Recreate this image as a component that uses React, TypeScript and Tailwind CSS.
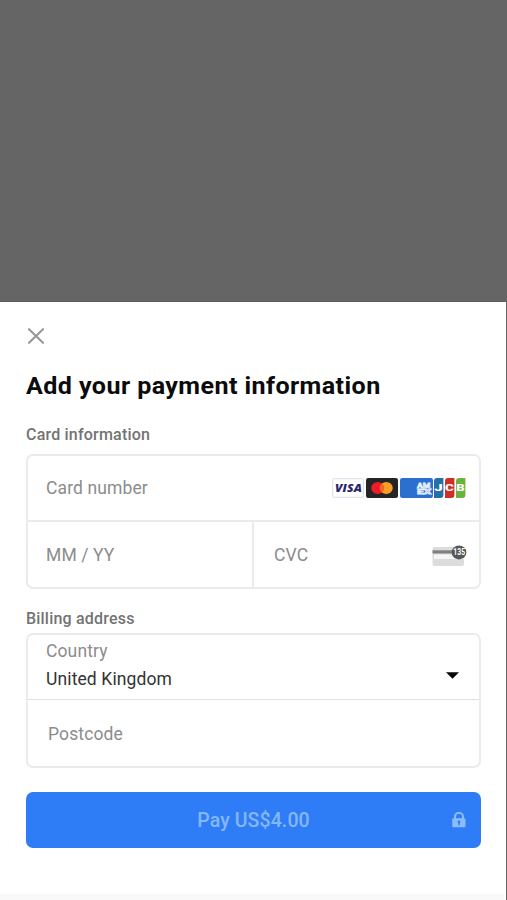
import React from "react";

const VisaLogo = () => (
  <svg width="32" height="20" viewBox="0 0 32 20">
    <rect x="0.6" y="0.6" width="30.8" height="18.8" rx="2" fill="#fff" stroke="#e4e4ee" strokeWidth="1.2" />
    <text
      x="3"
      y="13.8"
      textLength="27"
      lengthAdjust="spacingAndGlyphs"
      fontFamily="Open Sans, sans-serif"
      fontSize="10.8"
      fontWeight="800"
      fontStyle="italic"
      fill="#28256e"
    >
      VISA
    </text>
  </svg>
);

const MastercardLogo = () => (
  <svg width="32" height="20" viewBox="0 0 32 20">
    <rect width="32" height="20" rx="2.2" fill="#252525" />
    <ellipse cx="11.7" cy="10" rx="6.5" ry="6" fill="#eb1c26" />
    <ellipse cx="20.3" cy="10" rx="6.5" ry="6" fill="#f79e2b" />
    <path d="M16 5.5a6.4 6 0 0 1 0 9a6.4 6 0 0 1 0-9z" fill="#fb6020" />
  </svg>
);

const AmexLogo = () => (
  <svg width="33" height="20" viewBox="0 0 33 20">
    <rect width="33" height="20" rx="2.2" fill="#2c70cf" />
    <g
      fontFamily="Roboto, sans-serif"
      fontSize="7.6"
      fontWeight="700"
      fill="#2c70cf"
      stroke="#e6f1ff"
      strokeWidth="0.8"
    >
      <text x="17" y="9.6" textLength="13.5" lengthAdjust="spacingAndGlyphs">
        AM
      </text>
      <text x="17" y="16" textLength="14.5" lengthAdjust="spacingAndGlyphs">
        EX
      </text>
    </g>
  </svg>
);

const JcbLogo = () => (
  <svg width="32" height="20" viewBox="0 0 32 20">
    <path d="M3 0H9.4V17A3 3 0 0 1 6.4 20H0V3A3 3 0 0 1 3 0z" fill="#266fa8" />
    <path d="M14 0H20.4V17A3 3 0 0 1 17.4 20H11V3A3 3 0 0 1 14 0z" fill="#cf2f25" />
    <path d="M25 0H31.4V17A3 3 0 0 1 28.4 20H22V3A3 3 0 0 1 25 0z" fill="#6cb33e" />
    <g fontFamily="Roboto, sans-serif" fontSize="9.5" fontWeight="900" fill="#fff">
      <text x="0.2" y="13.4" textLength="8.6" lengthAdjust="spacingAndGlyphs">
        J
      </text>
      <text x="11" y="13.4" textLength="9" lengthAdjust="spacingAndGlyphs">
        C
      </text>
      <text x="22.3" y="13.4" textLength="8.6" lengthAdjust="spacingAndGlyphs">
        B
      </text>
    </g>
  </svg>
);

const CvcIcon = () => (
  <svg width="35" height="22" viewBox="0 0 35 22">
    <rect x="0.5" y="2" width="31.5" height="19" rx="2" fill="#dcdcdc" />
    <rect x="0.5" y="5.3" width="23" height="3.2" fill="#808080" />
    <rect x="2" y="9.5" width="30" height="4.5" fill="#f6f6f6" />
    <ellipse cx="27" cy="7.4" rx="7.4" ry="7" fill="#575757" />
    <text
      x="21.2"
      y="10.4"
      textLength="12"
      lengthAdjust="spacingAndGlyphs"
      fontFamily="Roboto, sans-serif"
      fontSize="8.6"
      fontWeight="700"
      fill="#fff"
    >
      135
    </text>
  </svg>
);

const LockIcon = () => (
  <svg width="14" height="16" viewBox="0 0 14 16" fill="none">
    <path d="M3 7V4.8a4 4 0 0 1 8 0V7" stroke="#8bbcfd" strokeWidth="2" />
    <rect x="0.3" y="6.3" width="13.2" height="9" rx="1.3" fill="#8bbcfd" />
    <circle cx="7" cy="10" r="1.4" fill="#2f7df6" />
    <rect x="6.3" y="10" width="1.4" height="3.2" fill="#2f7df6" />
  </svg>
);

export default function App() {
  return (
    <div className="flex h-[900px] w-[507px] flex-col overflow-hidden border-r border-[#656565] bg-[#656565] font-['Roboto',sans-serif]">
      <div className="h-[302px] shrink-0 border-b border-[#5d5d5d]" />

      <div className="flex flex-1 flex-col bg-white pl-[26px] pr-[25px]">
        <button className="mt-[26px] ml-[2px] h-4 w-4" aria-label="Close">
          <svg width="16" height="16" viewBox="0 0 16 16">
            <path d="M1 1.2L15 14.8M15 1.2L1 14.8" stroke="#999" strokeWidth="2.2" strokeLinecap="round" />
          </svg>
        </button>

        <h1 className="mt-[26px] h-8 origin-left scale-x-[1.045] whitespace-nowrap text-[24px] leading-8 font-bold tracking-[0.4px] text-[#0b0b0b]">
          Add your payment information
        </h1>

        <h2 className="mt-[21px] h-6 text-[16px] leading-6 font-medium tracking-[0.2px] text-[#737373]">
          Card information
        </h2>
        <div className="mt-[7px] h-[135px] rounded-[7px] border-2 border-[#ebebeb] text-[17.5px] tracking-[0.12px] text-[#8c8c8c]">
          <div className="flex h-[66px] items-center justify-between border-b-2 border-[#ebebeb] pr-[13px] pl-[18px]">
            <span>Card number</span>
            <div className="flex">
              <VisaLogo />
              <div className="mx-[2px]">
                <MastercardLogo />
              </div>
              <AmexLogo />
              <div className="ml-px">
                <JcbLogo />
              </div>
            </div>
          </div>
          <div className="flex h-[65px]">
            <div className="flex w-[226px] items-center border-r-2 border-[#ebebeb] pt-[2px] pl-[18px]">
              MM / YY
            </div>
            <div className="flex flex-1 items-center justify-between pt-[2px] pr-[12px] pl-[20px]">
              <span>CVC</span>
              <CvcIcon />
            </div>
          </div>
        </div>

        <h2 className="mt-[18px] h-6 text-[16px] leading-6 font-medium tracking-[0.2px] text-[#737373]">
          Billing address
        </h2>
        <div className="mt-[2px] h-[135px] rounded-[7px] border-2 border-[#ebebeb] text-[17.5px] tracking-[0.12px] text-[#8c8c8c]">
          <div className="flex h-[65px] items-center justify-between border-b border-[#dfdfdf] pr-[20px] pb-[5px] pl-[18px]">
            <div className="leading-7">
              <p>Country</p>
              <p className="text-[#333]">United Kingdom</p>
            </div>
            <svg className="mt-[22px]" width="13" height="7" viewBox="0 0 13 7">
              <path d="M0 0.3H13L6.5 6.7z" fill="#050505" />
            </svg>
          </div>
          <div className="flex h-[66px] items-center pt-[2px] pl-5">Postcode</div>
        </div>

        <button className="mt-6 flex h-14 items-center rounded-[7px] bg-[#2f7df6] pr-[15px] text-[#84b7fd]">
          <span className="flex-1 pt-px pl-[29px] text-center text-[19.5px] font-medium tracking-[0.1px]">
            Pay US$4.00
          </span>
          <LockIcon />
        </button>

        <div className="-ml-[26px] mt-auto h-[6px] w-[504px] bg-[#f9f9f9]" />
      </div>
    </div>
  );
}
